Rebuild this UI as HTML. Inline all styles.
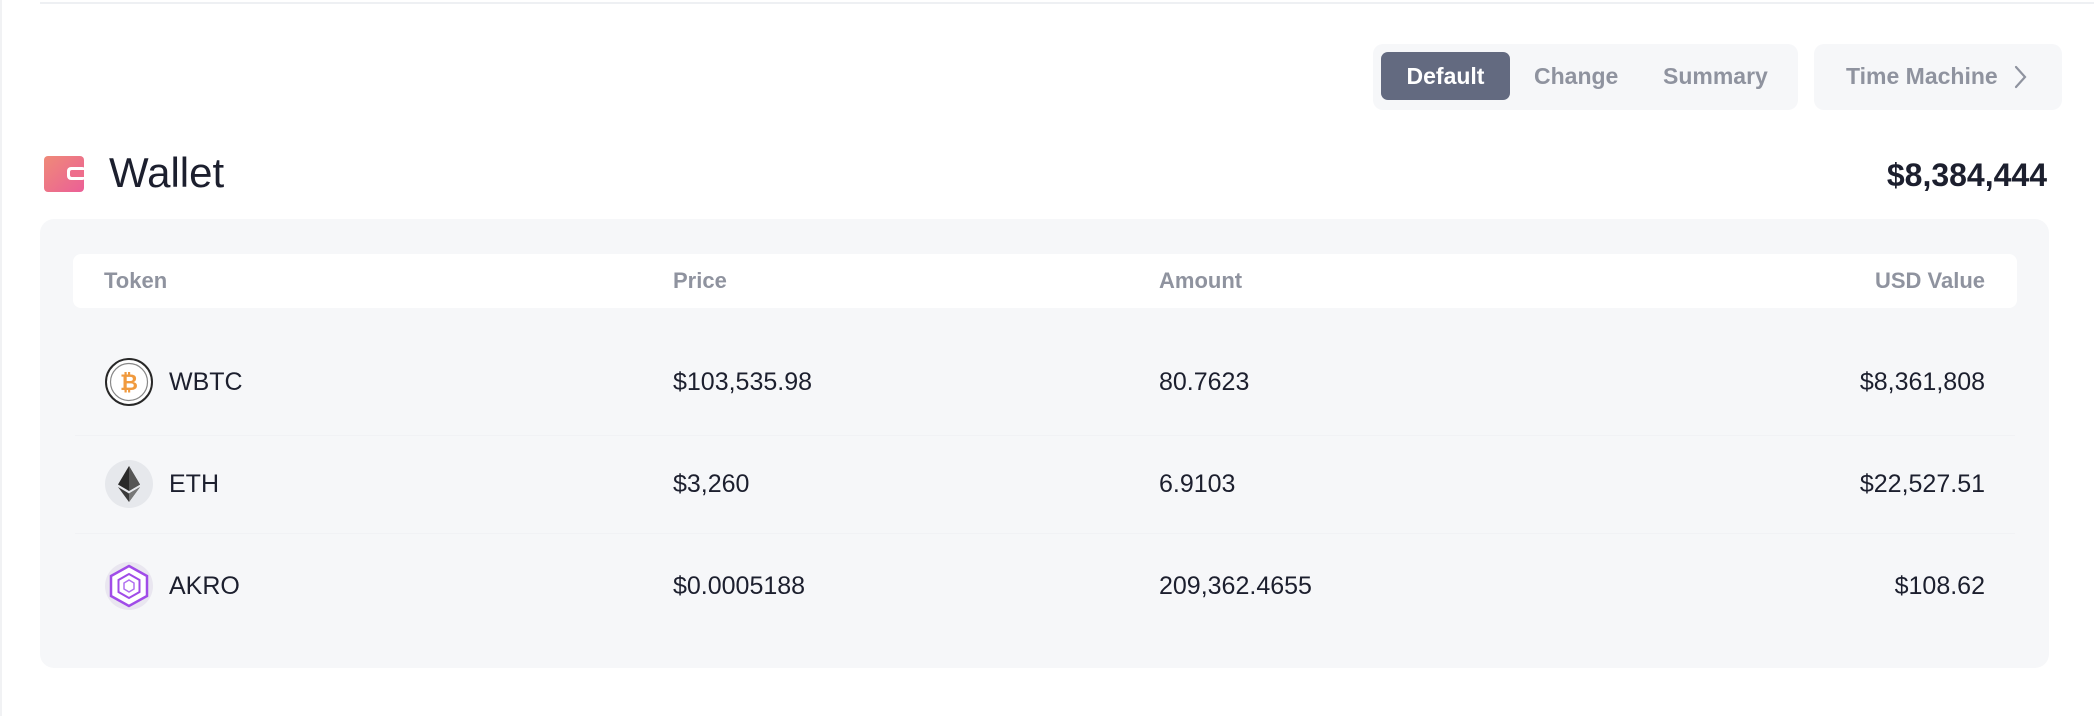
<!DOCTYPE html>
<html><head><meta charset="utf-8"><style>
*{margin:0;padding:0;box-sizing:border-box}
body{width:2094px;height:716px;background:#fff;font-family:"Liberation Sans",sans-serif;position:relative;overflow:hidden;color:#1c1f2e}
.a{position:absolute}
.topline{left:40px;top:2px;width:2054px;height:2px;background:#eef0f3}
.leftline{left:0;top:0;width:2px;height:716px;background:#f1f2f4}
.seg{left:1373px;top:44px;width:425px;height:66px;background:#f6f7f9;border-radius:10px}
.def{left:1381px;top:52px;width:129px;height:48px;background:#636a80;border-radius:7px;color:#fff;font-weight:bold;font-size:23px;line-height:48px;text-align:center}
.tab{font-size:23px;color:#8f939f;top:52px;line-height:48px;font-weight:bold}
.tm{left:1814px;top:44px;width:248px;height:66px;background:#f6f7f9;border-radius:10px}
.title{left:109px;top:148px;font-size:42px;line-height:50px;color:#1c1f2e}
.total{right:47px;top:153px;font-size:32px;font-weight:bold;line-height:44px}
.card{left:40px;top:219px;width:2009px;height:449px;background:#f6f7f9;border-radius:14px}
.hdr{left:73px;top:254px;width:1944px;height:54px;background:#fff;border-radius:8px}
.h{top:254px;line-height:54px;font-size:22px;color:#8f939f;font-weight:bold}
.c{font-size:25px;line-height:40px;color:#1c1f2e}
.div{left:75px;width:1940px;height:1px;background:#f1f2f5}
</style></head><body>
<div class="a leftline"></div>
<div class="a topline"></div>
<div class="a seg"></div>
<div class="a def">Default</div>
<div class="a tab" style="left:1534px">Change</div>
<div class="a tab" style="left:1663px">Summary</div>
<div class="a tm"></div>
<div class="a tab" style="left:1846px">Time Machine</div>
<svg class="a" style="left:2012px;top:64px" width="16" height="26" viewBox="0 0 16 26"><path d="M4 3l9 10-9 10" fill="none" stroke="#8f939f" stroke-width="2.2" stroke-linecap="round"/></svg>

<svg class="a" style="left:44px;top:156px" width="40" height="36" viewBox="0 0 40 36"><defs><linearGradient id="g" x1="0" y1="0" x2="1" y2="1"><stop offset="0" stop-color="#ef8a78"/><stop offset="1" stop-color="#eb5f97"/></linearGradient></defs><rect x="0" y="0" width="40" height="36" rx="4" fill="url(#g)"/><rect x="23" y="11" width="19" height="13" rx="4" fill="#fff"/><rect x="26" y="14" width="16" height="7" rx="2" fill="#ee6e8c"/></svg>
<div class="a title">Wallet</div>
<div class="a total">$8,384,444</div>

<div class="a card"></div>
<div class="a hdr"></div>
<div class="a h" style="left:104px">Token</div>
<div class="a h" style="left:673px">Price</div>
<div class="a h" style="left:1159px">Amount</div>
<div class="a h" style="right:109px">USD Value</div>

<div class="a div" style="top:435px"></div>
<div class="a div" style="top:533px"></div>

<svg class="a" style="left:105px;top:358px" width="48" height="48" viewBox="0 0 48 48"><circle cx="24" cy="24" r="23" fill="#fff" stroke="#282828" stroke-width="2"/><circle cx="24" cy="24" r="18.5" fill="none" stroke="#888" stroke-width="1.2"/><text x="24" y="32" font-size="22" font-weight="bold" fill="#f09a3e" text-anchor="middle" font-family="Liberation Sans">₿</text></svg>
<div class="a c" style="left:169px;top:362px">WBTC</div>
<div class="a c" style="left:673px;top:362px">$103,535.98</div>
<div class="a c" style="left:1159px;top:362px">80.7623</div>
<div class="a c" style="right:109px;top:362px">$8,361,808</div>

<svg class="a" style="left:105px;top:460px" width="48" height="48" viewBox="0 0 48 48"><circle cx="24" cy="24" r="24" fill="#e6e8ec"/><path d="M24 6L13 24.5 24 31 35 24.5z" fill="#2a2a2a"/><path d="M24 6v25l11-6.5z" fill="#555"/><path d="M13 27l11 15 11-15-11 6.5z" fill="#3a3a3a"/><path d="M24 33.5V42l11-15z" fill="#777"/></svg>
<div class="a c" style="left:169px;top:464px">ETH</div>
<div class="a c" style="left:673px;top:464px">$3,260</div>
<div class="a c" style="left:1159px;top:464px">6.9103</div>
<div class="a c" style="right:109px;top:464px">$22,527.51</div>

<svg class="a" style="left:105px;top:562px" width="48" height="48" viewBox="0 0 48 48"><circle cx="24" cy="24" r="24" fill="#e9e6f0"/><path d="M24 4l18 10v20L24 44 6 34V14z" fill="#fff" stroke="#a04ce8" stroke-width="2.5"/><path d="M24 12l10.5 6v12L24 36 13.5 30V18z" fill="none" stroke="#a04ce8" stroke-width="2"/><path d="M24 18l5 3v6l-5 3-5-3v-6z" fill="none" stroke="#b070f0" stroke-width="1.5"/></svg>
<div class="a c" style="left:169px;top:566px">AKRO</div>
<div class="a c" style="left:673px;top:566px">$0.0005188</div>
<div class="a c" style="left:1159px;top:566px">209,362.4655</div>
<div class="a c" style="right:109px;top:566px">$108.62</div>
</body></html>
